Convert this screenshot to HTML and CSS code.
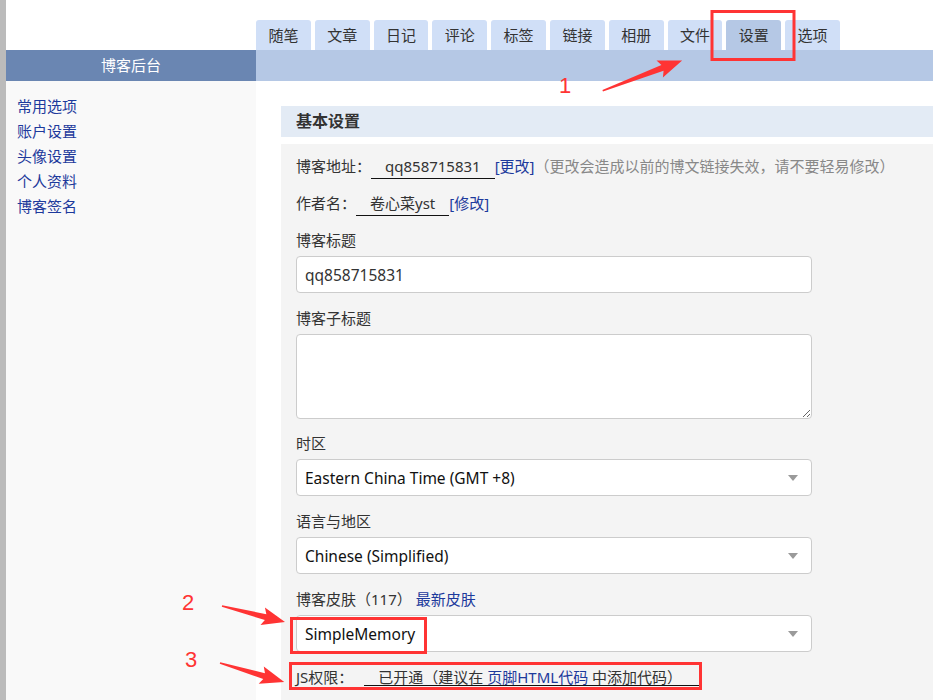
FILE: index.html
```html
<!DOCTYPE html>
<html lang="zh-CN">

<head>
    <meta charset="UTF-8">
    <meta name="viewport" content="width=device-width, initial-scale=1.0">
    <title>博客后台 - 设置</title>
    <link rel="stylesheet" href="styles.css">
</head>

<body>
    <div class="page">
        <div class="edge"></div>
        <div class="layout">
            <div class="top-spacer"></div>
            <nav class="tabs">
                <a class="tab">随笔</a>
                <a class="tab">文章</a>
                <a class="tab">日记</a>
                <a class="tab">评论</a>
                <a class="tab">标签</a>
                <a class="tab">链接</a>
                <a class="tab">相册</a>
                <a class="tab">文件</a>
                <a class="tab active">设置</a>
                <a class="tab">选项</a>
            </nav>
            <div class="side-title">博客后台</div>
            <div class="bar"></div>
            <aside class="side-nav">
                <a>常用选项</a>
                <a>账户设置</a>
                <a>头像设置</a>
                <a>个人资料</a>
                <a>博客签名</a>
            </aside>
            <main class="main">
                <div class="section-head">基本设置</div>
                <div class="panel">
                    <div class="info-row">
                        博客地址：<span class="value">qq858715831</span><a class="link">[更改]</a><span class="note">（更改会造成以前的博文链接失效，请不要轻易修改）</span>
                    </div>
                    <div class="info-row">
                        作者名：<span class="value">卷心菜yst</span><a class="link">[修改]</a>
                    </div>

                    <div class="field">
                        <div class="label">博客标题</div>
                        <input class="control" type="text" value="qq858715831">
                    </div>
                    <div class="field">
                        <div class="label">博客子标题</div>
                        <textarea class="control area"></textarea>
                    </div>
                    <div class="field">
                        <div class="label">时区</div>
                        <div class="select">
                            <select class="control">
                                <option>Eastern China Time (GMT +8)</option>
                            </select>
                        </div>
                    </div>
                    <div class="field">
                        <div class="label">语言与地区</div>
                        <div class="select">
                            <select class="control">
                                <option>Chinese (Simplified)</option>
                            </select>
                        </div>
                    </div>
                    <div class="field">
                        <div class="label">博客皮肤（117） <a class="link">最新皮肤</a></div>
                        <div class="select">
                            <select class="control">
                                <option>SimpleMemory</option>
                            </select>
                        </div>
                    </div>
                    <div class="info-row">
                        JS权限：<span class="value js">已开通（建议在 <a class="link">页脚HTML代码</a> 中添加代码）</span>
                    </div>
                </div>
            </main>
        </div>

        <!-- red annotation marks drawn over the screenshot -->
        <svg class="marks" width="933" height="700" viewBox="0 0 933 700">
            <g fill="none" stroke="#ff3434" stroke-width="3">
                <rect x="712" y="11.5" width="82" height="48"></rect>
                <rect x="291.5" y="618.5" width="134" height="34"></rect>
                <rect x="290.5" y="663.5" width="410" height="25"></rect>
            </g>
            <g fill="#ff3434">
                <g transform="translate(602.7 90.7) rotate(-20.85)">
                    <polygon points="0,-0.8 64,-3 61,-9 85,0 61,9 64,3 0,0.8"></polygon>
                </g>
                <g transform="translate(222 606) rotate(14.25)">
                    <polygon points="0,-0.8 45,-3 42,-9 65,0 42,9 45,3 0,0.8"></polygon>
                </g>
                <g transform="translate(220 663) rotate(16.5)">
                    <polygon points="0,-0.8 46,-3 43,-9 67,0 43,9 46,3 0,0.8"></polygon>
                </g>
                <text x="565" y="93" class="mark-num">1</text>
                <text x="188" y="610" class="mark-num">2</text>
                <text x="191" y="667" class="mark-num">3</text>
            </g>
        </svg>
    </div>
</body>

</html>
```

FILE: styles.css
```css
* {
    box-sizing: border-box;
}

html,
body {
    margin: 0;
    height: 100%;
    overflow: hidden;
}

body {
    font-family: "Noto Sans", "Noto Sans CJK SC", sans-serif;
    font-size: 15px;
    color: #333;
    background: #fff;
}

.page {
    position: relative;
    display: flex;
    height: 700px;
}

.edge {
    width: 6px;
    background: #bbbbbb;
}

.layout {
    flex: 1;
    display: grid;
    grid-template-columns: 250px 1fr;
    grid-template-rows: 50px 31px 1fr;
}

.tabs {
    display: flex;
    align-items: flex-end;
    gap: 4px;
}

.tab {
    width: 54.8px;
    height: 30px;
    line-height: 30px;
    text-align: center;
    background: #d0dff7;
    border-radius: 3px 3px 0 0;
    color: #333;
}

.tab.active {
    background: #b5c8e5;
}

.side-title {
    background: #6a86b2;
    color: #fff;
    text-align: center;
    line-height: 31px;
}

.bar {
    background: #b5c8e5;
}

.side-nav {
    background: #f9f9f9;
    padding: 13px 0 0 11px;
    display: flex;
    flex-direction: column;
    line-height: 25px;
}

.side-nav a {
    color: #1d3a9c;
}

.main {
    padding: 25px 0 0 25px;
    display: flex;
    flex-direction: column;
}

.section-head {
    background: #e3ebf5;
    height: 31px;
    line-height: 31px;
    padding-left: 15px;
    font-size: 16px;
    font-weight: bold;
    margin-bottom: 7px;
}

.panel {
    flex: 1;
    background: #f4f4f4;
    padding: 12px 0 0 15px;
}

.info-row {
    line-height: 20px;
    height: 20px;
    margin-bottom: 17px;
    white-space: nowrap;
}

.value {
    display: inline-block;
    padding: 0 14px 2px;
    border-bottom: 1px solid #111;
    line-height: 20px;
}

.value.js {
    margin-left: 11px;
    padding: 0 18px 0 14px;
    line-height: 15px;
}

.link {
    color: #1d3a9c;
}

.note {
    color: #888;
}

.field {
    margin-bottom: 15px;
}

.field:nth-of-type(1),
.field:nth-of-type(4) {
    margin-bottom: 14px;
}

.label {
    line-height: 20px;
    margin-bottom: 6px;
}

.control {
    display: block;
    width: 516px;
    height: 37px;
    border: 1px solid #ccc;
    border-radius: 4px;
    background: #fff;
    padding: 0 8px;
    font-family: "Noto Sans", "Noto Sans CJK SC", sans-serif;
    font-size: 15.5px;
    color: #333;
    outline: none;
}

.area {
    height: 85px;
    resize: vertical;
}

.select {
    position: relative;
    width: 516px;
}

.select select {
    appearance: none;
    -webkit-appearance: none;
    color: #111;
}

.select::after {
    content: "";
    position: absolute;
    right: 14px;
    top: 16px;
    border-left: 5px solid transparent;
    border-right: 5px solid transparent;
    border-top: 6px solid #9a9a9a;
}

.marks {
    position: absolute;
    left: 0;
    top: 0;
    pointer-events: none;
}

.mark-num {
    font-family: "Liberation Sans", Arial, sans-serif;
    font-size: 22px;
    text-anchor: middle;
}
```
